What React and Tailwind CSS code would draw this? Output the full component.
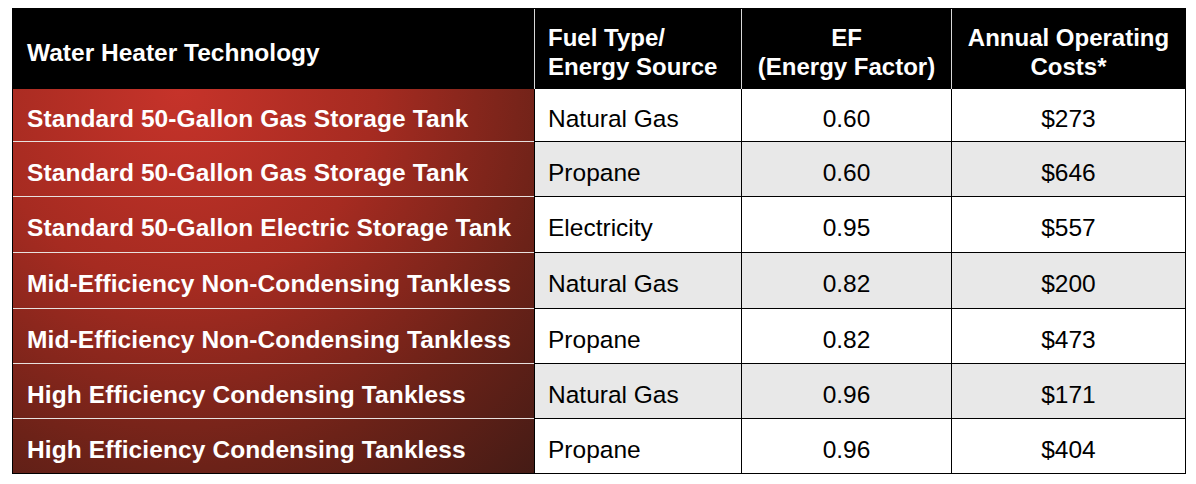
const rows = [
  { tech: 'Standard 50-Gallon Gas Storage Tank', fuel: 'Natural Gas', ef: '0.60', cost: '$273', h: 'h-[52px]', bg: 'bg-white' },
  { tech: 'Standard 50-Gallon Gas Storage Tank', fuel: 'Propane', ef: '0.60', cost: '$646', h: 'h-[55px]', bg: 'bg-[#e8e8e8]' },
  { tech: 'Standard 50-Gallon Electric Storage Tank', fuel: 'Electricity', ef: '0.95', cost: '$557', h: 'h-[56px]', bg: 'bg-white' },
  { tech: 'Mid-Efficiency Non-Condensing Tankless', fuel: 'Natural Gas', ef: '0.82', cost: '$200', h: 'h-[56px]', bg: 'bg-[#e8e8e8]' },
  { tech: 'Mid-Efficiency Non-Condensing Tankless', fuel: 'Propane', ef: '0.82', cost: '$473', h: 'h-[55px]', bg: 'bg-white' },
  { tech: 'High Efficiency Condensing Tankless', fuel: 'Natural Gas', ef: '0.96', cost: '$171', h: 'h-[55px]', bg: 'bg-[#e8e8e8]' },
  { tech: 'High Efficiency Condensing Tankless', fuel: 'Propane', ef: '0.96', cost: '$404', h: 'h-[55px]', bg: 'bg-white' },
];

export default function App() {
  return (
    <div className="w-[1196px] h-[484px] bg-white pt-2 pl-3 font-['Liberation_Sans',Arial,sans-serif]">
      <div className="w-[1174px] border border-black">
        {/* Header */}
        <div className="grid grid-cols-[521px_207px_210px_1fr] h-[80px] bg-black text-white font-bold text-[24px] leading-[29px]">
          <div className="flex items-center pl-[14px] pt-[6px] text-[24.5px]">Water Heater Technology</div>
          <div className="flex flex-col justify-center pl-[13px] pt-[6px] border-l border-[#d8d8d8]">
            <span>Fuel Type/</span>
            <span>Energy Source</span>
          </div>
          <div className="flex flex-col justify-center items-center pt-[6px] border-l border-[#d8d8d8]">
            <span>EF</span>
            <span>(Energy Factor)</span>
          </div>
          <div className="flex flex-col justify-center items-center pt-[6px] border-l border-[#d8d8d8]">
            <span>Annual Operating</span>
            <span>Costs*</span>
          </div>
        </div>

        {/* Body */}
        <div className="flex">
          <div className="w-[521px] flex flex-col bg-[radial-gradient(ellipse_125%_170%_at_32%_0%,#c6332a_0%,#a62b21_30%,#6c2218_58%,#3c1a15_85%,#2f1613_100%)]">
            {rows.map((r, i) => (
              <div
                key={i}
                className={`${r.h} flex items-center pl-[14px] pt-2 text-white font-bold text-[24.5px] tracking-[0.1px] ${i > 0 ? 'border-t border-[#e8e0de]' : ''}`}
              >
                {r.tech}
              </div>
            ))}
          </div>
          <div className="flex-1 flex flex-col text-black text-[24.5px]">
            {rows.map((r, i) => (
              <div
                key={i}
                className={`${r.h} ${r.bg} grid grid-cols-[207px_210px_1fr] ${i > 0 ? 'border-t border-black' : ''}`}
              >
                <div className="flex items-center pl-[13px] pt-2 border-l border-black">{r.fuel}</div>
                <div className="flex items-center justify-center pt-2 border-l border-black">{r.ef}</div>
                <div className="flex items-center justify-center pt-2 border-l border-black">{r.cost}</div>
              </div>
            ))}
          </div>
        </div>
      </div>
    </div>
  );
}
